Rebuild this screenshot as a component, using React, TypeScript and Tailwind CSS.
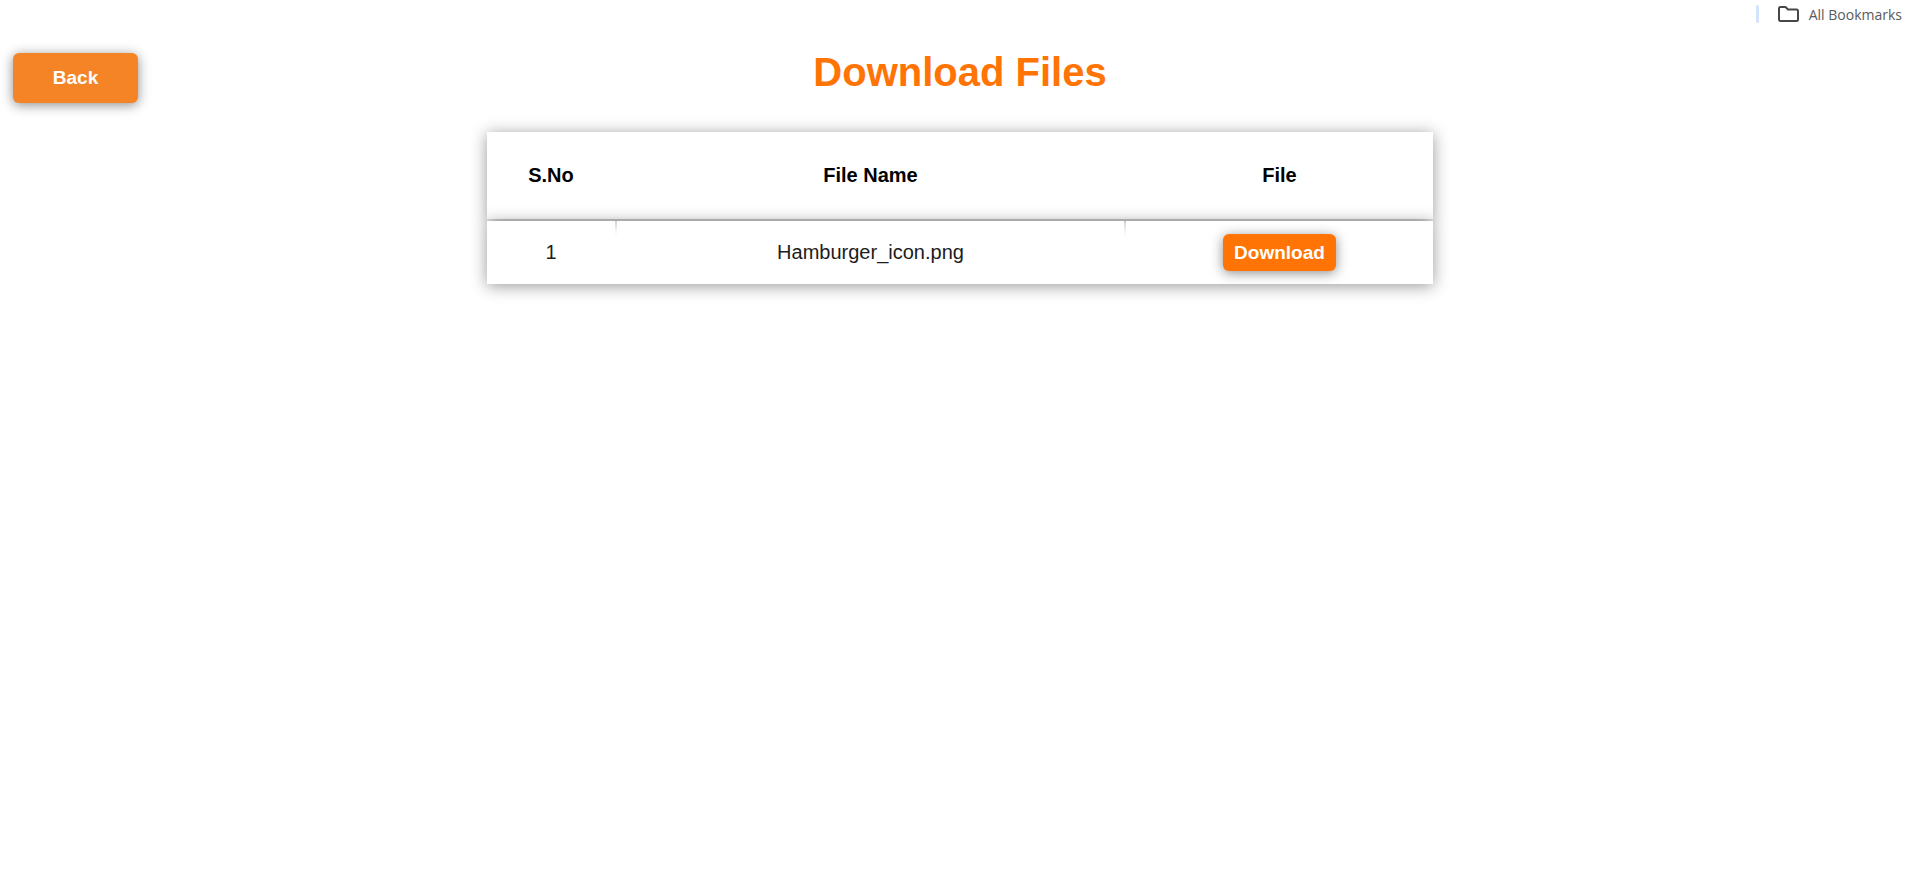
import React from "react";

const files = [{ id: 1, name: "Hamburger_icon.png" }];

const rowShadow = "shadow-[0_2px_15px_rgba(32,26,26,0.45)]";

function BookmarksBar() {
  return (
    <div className="flex h-7 items-center justify-end pr-[5px]">
      <span className="mr-[19px] h-[18px] w-[3px] rounded-full bg-[#d3e3fd]" />
      <a
        href="#bookmarks"
        className="flex items-center gap-[10px] font-['Open_Sans',sans-serif] text-[14px] text-[#5a5a5a]"
      >
        <svg width="21" height="16" viewBox="0 0 21 16" fill="none" stroke="#474747" strokeWidth="2" strokeLinejoin="round">
          <path d="M1 2.5Q1 1 2.5 1H7.5L10 3.5H18.5Q20 3.5 20 5V13.5Q20 15 18.5 15H2.5Q1 15 1 13.5Z" />
        </svg>
        All Bookmarks
      </a>
    </div>
  );
}

export default function App() {
  return (
    <div className="min-h-screen bg-white font-['Liberation_Sans',Arial,sans-serif] text-black">
      <BookmarksBar />
      <header className="grid grid-cols-[1fr_auto_1fr] items-start px-[13px] pt-5">
        <button
          type="button"
          className="mt-[5px] h-[50px] w-[125px] rounded-md bg-[#f58427] text-[19px] leading-6 font-bold text-white shadow-[0_2px_12px_rgba(32,26,26,0.5)]"
        >
          Back
        </button>
        <h1 className="ml-[13px] text-[40px] leading-[48px] font-bold text-[#ff7404]">Download Files</h1>
      </header>
      <main className="flex justify-center pt-[27px] pl-[13px]">
        <table className="w-[calc(50%+3px)] border-separate border-spacing-[2px] text-xl">
          <thead>
            <tr className={rowShadow}>
              <th className="h-[87px] w-[128px] bg-white pb-0.5">S.No</th>
              <th className="bg-white pb-0.5">File Name</th>
              <th className="w-[307px] bg-white pb-0.5">File</th>
            </tr>
          </thead>
          <tbody>
            {files.map((file) => (
              <tr key={file.id} className={rowShadow}>
                <td className="h-[63px] bg-white pb-0.5 text-center text-[#1c1c1c]">{file.id}</td>
                <td className="bg-white pb-0.5 text-center text-[#1c1c1c]">{file.name}</td>
                <td className="bg-white text-center">
                  <button
                    type="button"
                    className="h-[37px] w-[113px] rounded-md bg-[#ff7404] align-middle text-[19px] leading-6 font-bold text-white shadow-[0_2px_12px_rgba(32,26,26,0.5)]"
                  >
                    Download
                  </button>
                </td>
              </tr>
            ))}
          </tbody>
        </table>
      </main>
    </div>
  );
}
